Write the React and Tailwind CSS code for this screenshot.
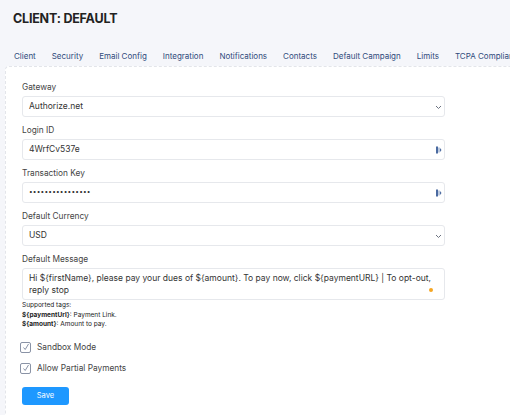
import React from "react";

const font = { fontFamily: "Inter, 'Noto Sans', sans-serif" };

function Chevron() {
  return (
    <svg width="7" height="5" viewBox="0 0 7 5" className="absolute right-[2px] top-[8px]">
      <path d="M1 1 L3.5 3.5 L6 1" fill="none" stroke="#6b7280" strokeWidth="1" />
    </svg>
  );
}

function EyeIcon() {
  return (
    <svg width="6" height="8" viewBox="0 0 6 8" className="absolute right-[2px] top-[6px]">
      <rect x="0" y="0.5" width="2" height="7" fill="#4a6aa0" />
      <rect x="2.5" y="1.5" width="1" height="5" fill="#7d95c0" />
      <path d="M4 2 L5.5 4 L4 6 Z" fill="#4a6aa0" />
    </svg>
  );
}

function Field({ label, children }) {
  return (
    <div className="flex flex-col">
      <div className="text-[8.3px] text-[#444] h-[13px] leading-[13px] mb-[2px]">{label}</div>
      {children}
    </div>
  );
}

function Box({ children, icon }) {
  return (
    <div className="relative h-[21px] w-[423px] border border-[#e6e8ec] rounded-[3px] bg-white flex items-center pl-[6px] text-[8.5px] text-[#333]">
      {children}
      {icon}
    </div>
  );
}

function Check({ label }) {
  return (
    <div className="flex items-center h-[21px]">
      <div className="w-[11px] h-[11px] border border-[#8a93a6] rounded-[2px] flex items-center justify-center bg-white">
        <svg width="8" height="8" viewBox="0 0 8 8">
          <path d="M1.5 4.5 L3.2 6.5 L6.5 1" fill="none" stroke="#7b869c" strokeWidth="0.9" />
        </svg>
      </div>
      <span className="ml-[6px] text-[8.3px] text-[#444]">{label}</span>
    </div>
  );
}

export default function App() {
  const tabs = ["Client", "Security", "Email Config", "Integration", "Notifications", "Contacts", "Default Campaign", "Limits", "TCPA Compliance"];
  return (
    <div style={font} className="w-[510px] h-[415px] bg-[#f5f6fa] overflow-hidden">
      <div className="pl-[13px] pt-[10px] h-[45px] text-[12.5px] font-bold text-[#222] tracking-[-0.2px]">CLIENT: DEFAULT</div>
      <div className="flex pl-[14px] gap-[16px] whitespace-nowrap overflow-hidden text-[8px] text-[#2f4a7a] h-[21px] items-center">
        {tabs.map((t) => (
          <span key={t}>{t}</span>
        ))}
      </div>
      <div className="ml-[5px] bg-white rounded-tl-[4px] border-l border-t border-dashed border-[#e3e5ea] h-[360px] pl-[16px] pt-[14px]">
        <div className="flex flex-col gap-[7px]">
          <Field label="Gateway">
            <Box icon={<Chevron />}>Authorize.net</Box>
          </Field>
          <Field label="Login ID">
            <Box icon={<EyeIcon />}>4WrfCv537e</Box>
          </Field>
          <Field label="Transaction Key">
            <Box icon={<EyeIcon />}><span className="text-[6.5px] tracking-[0.2px]">••••••••••••••••</span></Box>
          </Field>
          <Field label="Default Currency">
            <Box icon={<Chevron />}>USD</Box>
          </Field>
          <Field label="Default Message">
            <div className="relative h-[32px] w-[423px] border border-[#e6e8ec] rounded-[3px] bg-white pl-[6px] pr-[8px] pt-[3px] text-[8.5px] leading-[12px] text-[#333]">
              Hi {"${firstName}"}, please pay your dues of {"${amount}"}. To pay now, click {"${paymentURL}"} | To opt-out, reply stop
              <div className="absolute right-[11px] bottom-[7px] w-[4px] h-[4px] rounded-full bg-[#f5a623]" />
            </div>
          </Field>
        </div>
        <div className="mt-[1px] text-[6.5px] leading-[9.5px] text-[#222]">
          <div>Supported tags:</div>
          <div><b>{"${paymentUrl}"}</b>: Payment Link.</div>
          <div><b>{"${amount}"}</b>: Amount to pay.</div>
        </div>
        <div className="mt-[7px] -ml-[2px] flex flex-col">
          <Check label="Sandbox Mode" />
          <Check label="Allow Partial Payments" />
        </div>
        <button className="mt-[8px] w-[47px] h-[18px] rounded-[3px] bg-[#1e98ff] text-white text-[7.5px] flex items-center justify-center">Save</button>
      </div>
    </div>
  );
}
